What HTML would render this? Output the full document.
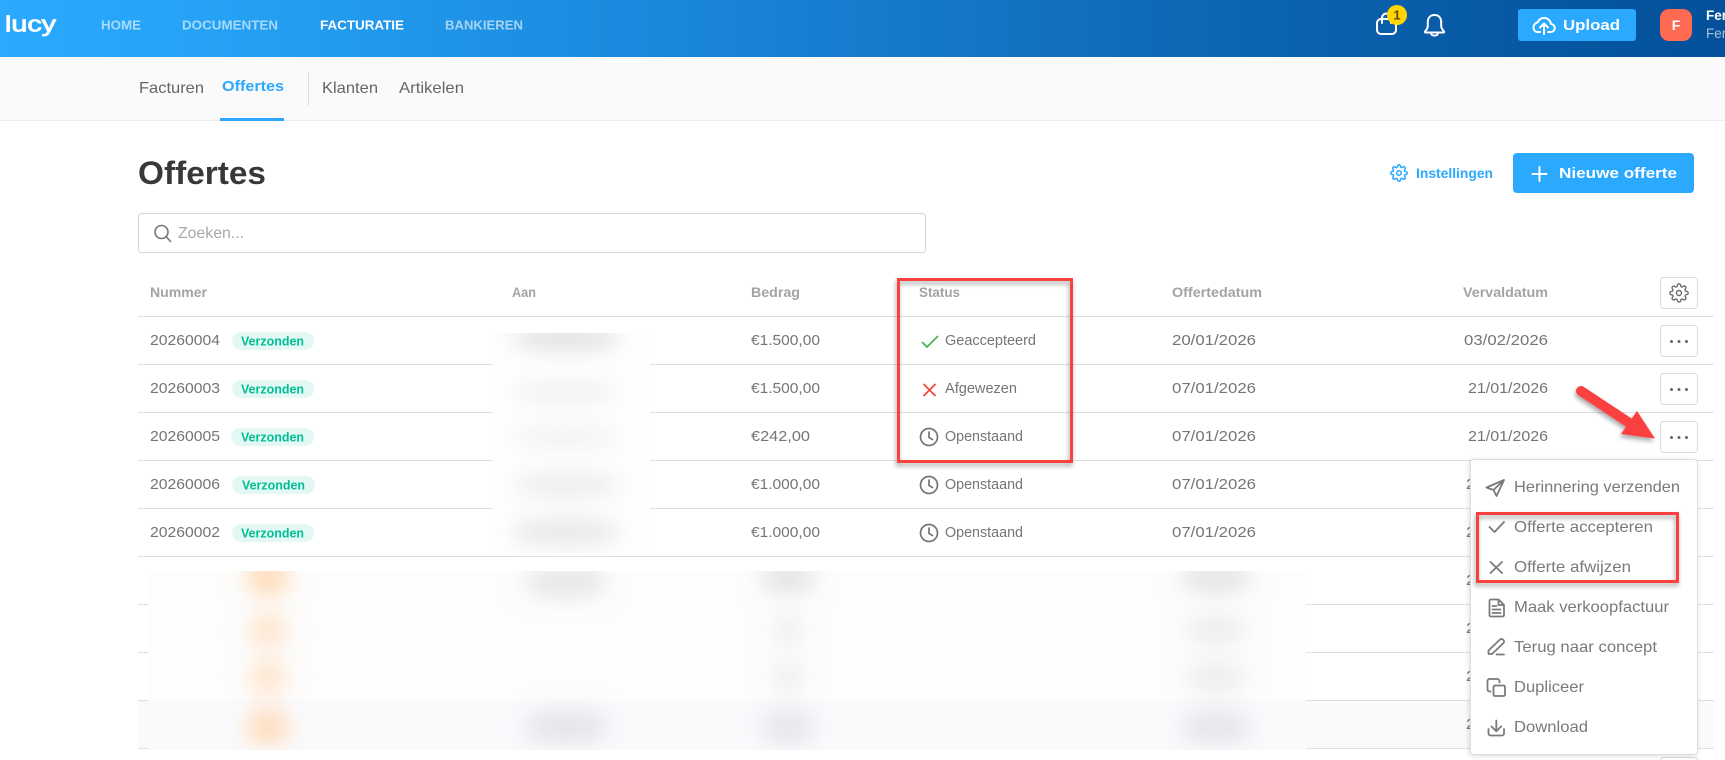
<!DOCTYPE html>
<html lang="nl"><head><meta charset="utf-8"><title>Offertes</title>
<style>
html,body{margin:0;padding:0;background:#fff;width:1725px;height:760px;overflow:hidden}
svg{display:block}
text{font-family:"Liberation Sans",sans-serif;font-size:15px;fill:#757575}
.h{font-weight:bold;font-size:13.5px;fill:#a3a3a3}
.nav{font-weight:bold;font-size:13px;fill:#fff;fill-opacity:.6}
.tab{font-size:16px;fill:#666}
.bd{font-weight:bold;font-size:13px;fill:#00bf94}
.m{font-size:16px;fill:#7a7a7a}
.st{fill:none;stroke:#757575;stroke-width:1.7;stroke-linecap:round;stroke-linejoin:round}
</style></head><body>
<svg width="1725" height="760" viewBox="0 0 1725 760" xmlns="http://www.w3.org/2000/svg">
<defs>
<linearGradient id="hd" x1="0" y1="0" x2="1725" y2="0" gradientUnits="userSpaceOnUse"><stop offset="0" stop-color="#2aa9ff"/><stop offset=".12" stop-color="#25a2f5"/><stop offset=".42" stop-color="#1984d8"/><stop offset=".75" stop-color="#0b62ae"/><stop offset="1" stop-color="#04509a"/></linearGradient>
<filter id="b6" x="-30%" y="-30%" width="160%" height="160%"><feGaussianBlur stdDeviation="11"/></filter>
<filter id="sh" x="-10%" y="-10%" width="120%" height="125%"><feDropShadow dx="-1" dy="3" stdDeviation="2.5" flood-color="#000" flood-opacity=".35"/></filter>
<filter id="mn" x="-10%" y="-10%" width="120%" height="120%"><feDropShadow dx="-1" dy="1" stdDeviation="2.5" flood-color="#000" flood-opacity=".14"/></filter>
<clipPath id="c1"><rect x="493" y="333" width="157" height="220"/></clipPath>
<clipPath id="c2"><rect x="148" y="571" width="1158" height="179"/></clipPath>
<symbol id="gear" viewBox="0 0 24 24"><circle cx="12" cy="12" r="3"/><path d="M19.4 15a1.65 1.65 0 0 0 .33 1.82l.06.06a2 2 0 0 1 0 2.83 2 2 0 0 1-2.83 0l-.06-.06a1.65 1.65 0 0 0-1.82-.33 1.65 1.65 0 0 0-1 1.51V21a2 2 0 0 1-2 2 2 2 0 0 1-2-2v-.09A1.65 1.65 0 0 0 9 19.4a1.65 1.65 0 0 0-1.82.33l-.06.06a2 2 0 0 1-2.83 0 2 2 0 0 1 0-2.83l.06-.06a1.65 1.65 0 0 0 .33-1.82 1.65 1.65 0 0 0-1.51-1H3a2 2 0 0 1-2-2 2 2 0 0 1 2-2h.09A1.65 1.65 0 0 0 4.6 9a1.65 1.65 0 0 0-.33-1.82l-.06-.06a2 2 0 0 1 0-2.83 2 2 0 0 1 2.83 0l.06.06a1.65 1.65 0 0 0 1.82.33H9a1.65 1.65 0 0 0 1-1.51V3a2 2 0 0 1 2-2 2 2 0 0 1 2 2v.09a1.65 1.65 0 0 0 1 1.51 1.65 1.65 0 0 0 1.82-.33l.06-.06a2 2 0 0 1 2.83 0 2 2 0 0 1 0 2.83l-.06.06a1.65 1.65 0 0 0-.33 1.82V9a1.65 1.65 0 0 0 1.51 1H21a2 2 0 0 1 2 2 2 2 0 0 1-2 2h-.09a1.65 1.65 0 0 0-1.51 1z"/></symbol>
</defs>

<!-- header -->
<rect width="1725" height="57" fill="url(#hd)"/>
<text x="5" y="31.5" textLength="51" lengthAdjust="spacingAndGlyphs" style="font-size:22px;fill:#fff;stroke:#fff;stroke-width:.8">lucy</text>
<text class="nav" x="101" y="29.5" textLength="40" lengthAdjust="spacingAndGlyphs">HOME</text>
<text class="nav" x="182" y="29.5" textLength="96" lengthAdjust="spacingAndGlyphs">DOCUMENTEN</text>
<text class="nav" x="320" y="29.5" textLength="84" lengthAdjust="spacingAndGlyphs" style="fill-opacity:1">FACTURATIE</text>
<text class="nav" x="445" y="29.5" textLength="78" lengthAdjust="spacingAndGlyphs">BANKIEREN</text>

<rect x="1377" y="19" width="19" height="15" rx="4" fill="none" stroke="#fff" stroke-width="2"/>
<path d="M1382 23v-5a4.500 4.500 0 0 1 9 0v5" fill="none" stroke="#fff" stroke-width="2" stroke-linecap="round"/>
<circle cx="1397" cy="15" r="10" fill="#ffd600"/>
<text x="1397" y="19.500" text-anchor="middle" style="font-size:13px;font-weight:bold;fill:#6b3f1d">1</text>
<path d="M1434.500 15c-4.800 0-6.700 3.600-6.700 7.500v3.500c0 2-1 3.500-2.800 5.500-.5.600 0 1 .5 1h18c.5 0 1-.4.500-1-1.800-2-2.800-3.500-2.800-5.500v-3.500c0-3.900-1.900-7.500-6.700-7.500z" fill="none" stroke="#fff" stroke-width="2" stroke-linejoin="round"/>
<path d="M1431 33.500a3.600 2.800 0 0 0 7 0" fill="none" stroke="#fff" stroke-width="2"/>

<rect x="1518" y="9" width="118" height="32" rx="3" fill="#2aa9ff"/>
<path d="M1548 32h2.500a4 4 0 0 0 .5-8 7 7 0 0 0-13.500-1.500 5 5 0 0 0-1 9.500h3.500" fill="none" stroke="#fff" stroke-width="2" stroke-linecap="round" stroke-linejoin="round"/>
<path d="M1544 34v-10M1540 27.500l4-4 4 4" fill="none" stroke="#fff" stroke-width="2" stroke-linecap="round" stroke-linejoin="round"/>
<text x="1563" y="30" textLength="57" lengthAdjust="spacingAndGlyphs" style="font-size:15px;font-weight:bold;fill:#fff">Upload</text>
<rect x="1660" y="9" width="32" height="32" rx="9" fill="#ff6b52"/>
<text x="1676" y="30" text-anchor="middle" style="font-size:14px;font-weight:bold;fill:#fff">F</text>
<text x="1706" y="20" style="font-size:13.500px;font-weight:bold;fill:#fff">Fer</text>
<text x="1706" y="38" style="font-size:13.500px;fill:#a9c3dc">Fer</text>

<!-- subnav -->
<rect y="57" width="1725" height="63" fill="#fafafa"/>
<rect y="120" width="1725" height="1" fill="#eee"/>
<text class="tab" x="139" y="93" textLength="65" lengthAdjust="spacingAndGlyphs">Facturen</text>
<text class="tab" x="222" y="91" textLength="62" lengthAdjust="spacingAndGlyphs" style="fill:#2aa9ff;font-weight:bold;font-size:15px">Offertes</text>
<rect x="220" y="118" width="64" height="3" fill="#2aa9ff"/>
<rect x="308" y="72" width="1" height="34" fill="#ddd"/>
<text class="tab" x="322" y="93" textLength="56" lengthAdjust="spacingAndGlyphs">Klanten</text>
<text class="tab" x="399" y="93" textLength="65" lengthAdjust="spacingAndGlyphs">Artikelen</text>

<!-- title -->
<text x="138" y="184" textLength="128" lengthAdjust="spacingAndGlyphs" style="font-size:32px;font-weight:bold;fill:#383838">Offertes</text>
<use href="#gear" x="1390" y="164" width="18" height="18" fill="none" stroke="#2aa9ff" stroke-width="2"/>
<text x="1416" y="178" textLength="77" lengthAdjust="spacingAndGlyphs" style="font-size:13.500px;font-weight:bold;fill:#2aa9ff">Instellingen</text>
<rect x="1513" y="153" width="181" height="40" rx="4" fill="#2aa9ff"/>
<path d="M1539.500 167v14M1532.500 174h14" stroke="#fff" stroke-width="2" stroke-linecap="round"/>
<text x="1559" y="178" textLength="118" lengthAdjust="spacingAndGlyphs" style="font-size:15px;font-weight:bold;fill:#fff">Nieuwe offerte</text>

<!-- search -->
<rect x="138.500" y="213.500" width="787" height="39" rx="3" fill="#fff" stroke="#d6d6d6"/>
<circle cx="161.500" cy="232" r="6.500" fill="none" stroke="#777" stroke-width="1.600"/>
<path d="M166.500 237l4 4.500" stroke="#777" stroke-width="1.600" stroke-linecap="round"/>
<text x="178" y="238" textLength="66" lengthAdjust="spacingAndGlyphs" style="font-size:16px;fill:#a8a8a8">Zoeken...</text>

<!-- table head -->
<text class="h" x="150" y="297" textLength="57" lengthAdjust="spacingAndGlyphs">Nummer</text>
<text class="h" x="512" y="297" textLength="24" lengthAdjust="spacingAndGlyphs">Aan</text>
<text class="h" x="751" y="297" textLength="49" lengthAdjust="spacingAndGlyphs">Bedrag</text>
<text class="h" x="919" y="297" textLength="41" lengthAdjust="spacingAndGlyphs">Status</text>
<text class="h" x="1172" y="297" textLength="90" lengthAdjust="spacingAndGlyphs">Offertedatum</text>
<text class="h" x="1463" y="297" textLength="85" lengthAdjust="spacingAndGlyphs">Vervaldatum</text>

<!-- row lines -->
<g fill="#dedede">
<rect x="138" y="316" width="1576" height="1"/><rect x="138" y="364" width="1576" height="1"/><rect x="138" y="412" width="1576" height="1"/><rect x="138" y="460" width="1576" height="1"/><rect x="138" y="508" width="1576" height="1"/><rect x="138" y="556" width="1576" height="1"/>
<rect x="138" y="604" width="1576" height="1"/><rect x="138" y="652" width="1576" height="1"/>
</g>
<rect x="138" y="701" width="1576" height="47" fill="#fafafd"/>
<g fill="#dedede"><rect x="138" y="700" width="1576" height="1"/><rect x="138" y="748" width="1576" height="1"/></g>

<!-- rows -->
<g>
<text x="150" y="345" textLength="70" lengthAdjust="spacingAndGlyphs">20260004</text>
<text x="150" y="393" textLength="70" lengthAdjust="spacingAndGlyphs">20260003</text>
<text x="150" y="441" textLength="70" lengthAdjust="spacingAndGlyphs">20260005</text>
<text x="150" y="489" textLength="70" lengthAdjust="spacingAndGlyphs">20260006</text>
<text x="150" y="537" textLength="70" lengthAdjust="spacingAndGlyphs">20260002</text>
</g>
<g fill="#e3f8f5">
<rect x="232" y="332" width="82" height="18" rx="9"/><rect x="232" y="380" width="82" height="18" rx="9"/><rect x="231" y="428" width="83" height="18" rx="9"/><rect x="232" y="476" width="83" height="18" rx="9"/><rect x="232" y="524" width="82" height="18" rx="9"/>
</g>
<text class="bd" x="241" y="345.500" textLength="63" lengthAdjust="spacingAndGlyphs">Verzonden</text>
<text class="bd" x="241" y="393.500" textLength="63" lengthAdjust="spacingAndGlyphs">Verzonden</text>
<text class="bd" x="241" y="441.500" textLength="63" lengthAdjust="spacingAndGlyphs">Verzonden</text>
<text class="bd" x="242" y="489.500" textLength="63" lengthAdjust="spacingAndGlyphs">Verzonden</text>
<text class="bd" x="241" y="537.500" textLength="63" lengthAdjust="spacingAndGlyphs">Verzonden</text>

<text x="751" y="345" textLength="69" lengthAdjust="spacingAndGlyphs">€1.500,00</text>
<text x="751" y="393" textLength="69" lengthAdjust="spacingAndGlyphs">€1.500,00</text>
<text x="751" y="441" textLength="59" lengthAdjust="spacingAndGlyphs">€242,00</text>
<text x="751" y="489" textLength="69" lengthAdjust="spacingAndGlyphs">€1.000,00</text>
<text x="751" y="537" textLength="69" lengthAdjust="spacingAndGlyphs">€1.000,00</text>

<path d="M922 342l5 5 11-11" fill="none" stroke="#46b450" stroke-width="1.700"/>
<text x="945" y="345" textLength="91" lengthAdjust="spacingAndGlyphs">Geaccepteerd</text>
<path d="M923.500 384l12 12M935.500 384l-12 12" fill="none" stroke="#f44336" stroke-width="1.700"/>
<text x="945" y="393" textLength="72" lengthAdjust="spacingAndGlyphs">Afgewezen</text>
<g class="st"><circle cx="929" cy="437" r="8.500"/><path d="M929 432v5.500l3.500 2"/></g>
<text x="945" y="441" textLength="78" lengthAdjust="spacingAndGlyphs">Openstaand</text>
<g class="st"><circle cx="929" cy="485" r="8.500"/><path d="M929 480v5.500l3.500 2"/></g>
<text x="945" y="489" textLength="78" lengthAdjust="spacingAndGlyphs">Openstaand</text>
<g class="st"><circle cx="929" cy="533" r="8.500"/><path d="M929 528v5.500l3.500 2"/></g>
<text x="945" y="537" textLength="78" lengthAdjust="spacingAndGlyphs">Openstaand</text>

<text x="1172" y="345" textLength="84" lengthAdjust="spacingAndGlyphs">20/01/2026</text>
<text x="1172" y="393" textLength="84" lengthAdjust="spacingAndGlyphs">07/01/2026</text>
<text x="1172" y="441" textLength="84" lengthAdjust="spacingAndGlyphs">07/01/2026</text>
<text x="1172" y="489" textLength="84" lengthAdjust="spacingAndGlyphs">07/01/2026</text>
<text x="1172" y="537" textLength="84" lengthAdjust="spacingAndGlyphs">07/01/2026</text>

<text x="1464" y="345" textLength="84" lengthAdjust="spacingAndGlyphs">03/02/2026</text>
<text x="1468" y="393" textLength="80" lengthAdjust="spacingAndGlyphs">21/01/2026</text>
<text x="1468" y="441" textLength="80" lengthAdjust="spacingAndGlyphs">21/01/2026</text>
<text x="1466" y="489" textLength="82" lengthAdjust="spacingAndGlyphs">21/01/2026</text>
<text x="1466" y="537" textLength="82" lengthAdjust="spacingAndGlyphs">21/01/2026</text>
<text x="1466" y="585" textLength="82" lengthAdjust="spacingAndGlyphs">21/01/2026</text>
<text x="1466" y="633" textLength="82" lengthAdjust="spacingAndGlyphs">21/01/2026</text>
<text x="1466" y="681" textLength="82" lengthAdjust="spacingAndGlyphs">21/01/2026</text>
<text x="1466" y="729" textLength="82" lengthAdjust="spacingAndGlyphs">21/01/2026</text>

<!-- blurred regions -->
<g clip-path="url(#c1)">
<rect x="493" y="333" width="157" height="220" fill="#fefefe"/>
<g filter="url(#b6)">
<ellipse cx="566" cy="338" rx="55" ry="12" fill="#e0e0e0"/>
<ellipse cx="566" cy="392" rx="55" ry="10" fill="#f0f0f0"/>
<ellipse cx="566" cy="437" rx="55" ry="10" fill="#f1f1f1"/>
<ellipse cx="566" cy="485" rx="55" ry="12" fill="#ececec"/>
<ellipse cx="566" cy="532" rx="55" ry="14" fill="#e8e8e8"/>
</g></g>
<g clip-path="url(#c2)">
<rect x="148" y="571" width="1158" height="179" fill="#fdfdfd"/>
<rect x="148" y="700" width="1158" height="50" fill="#fafafd"/>
<g filter="url(#b6)">
<ellipse cx="268" cy="578" rx="22" ry="18" fill="#ffdcb8"/>
<ellipse cx="268" cy="630" rx="20" ry="18" fill="#ffe6cf"/>
<ellipse cx="268" cy="677" rx="20" ry="18" fill="#ffe6cf"/>
<ellipse cx="268" cy="727" rx="22" ry="20" fill="#ffdfc0"/>
<ellipse cx="566" cy="582" rx="42" ry="16" fill="#e6e6e6"/>
<ellipse cx="566" cy="727" rx="44" ry="18" fill="#e6e6ea"/>
<ellipse cx="788" cy="578" rx="28" ry="16" fill="#e4e4e4"/>
<ellipse cx="788" cy="630" rx="16" ry="16" fill="#efefef"/>
<ellipse cx="788" cy="677" rx="16" ry="16" fill="#efefef"/>
<ellipse cx="788" cy="727" rx="28" ry="18" fill="#e7e7eb"/>
<ellipse cx="1216" cy="578" rx="36" ry="16" fill="#e5e5e5"/>
<ellipse cx="1216" cy="630" rx="32" ry="16" fill="#eeeeee"/>
<ellipse cx="1216" cy="677" rx="32" ry="16" fill="#eeeeee"/>
<ellipse cx="1216" cy="727" rx="36" ry="18" fill="#e7e7eb"/>
</g></g>

<!-- action buttons -->
<g fill="#fff" stroke="#dcdcdc">
<rect x="1660.500" y="277.500" width="37" height="31" rx="3"/>
<rect x="1660.500" y="325.500" width="37" height="31" rx="3"/>
<rect x="1660.500" y="373.500" width="37" height="31" rx="3"/>
<rect x="1660.500" y="421.500" width="37" height="31" rx="3"/>
<rect x="1660.500" y="757.500" width="37" height="31" rx="3"/>
</g>
<use href="#gear" x="1669" y="283" width="20" height="20" fill="none" stroke="#6e6e6e" stroke-width="1.700"/>
<g fill="#666">
<circle cx="1671.500" cy="341.500" r="1.500"/><circle cx="1679" cy="341.500" r="1.500"/><circle cx="1686.500" cy="341.500" r="1.500"/>
<circle cx="1671.500" cy="389.500" r="1.500"/><circle cx="1679" cy="389.500" r="1.500"/><circle cx="1686.500" cy="389.500" r="1.500"/>
<circle cx="1671.500" cy="437.500" r="1.500"/><circle cx="1679" cy="437.500" r="1.500"/><circle cx="1686.500" cy="437.500" r="1.500"/>
</g>

<!-- dropdown menu -->
<rect x="1470.500" y="459.500" width="227" height="295" rx="3" fill="#fff" stroke="#dedede" filter="url(#mn)"/>
<g class="st" style="stroke:#7a7a7a;stroke-width:1.800">
<path d="M1504 480l-17.500 7.500 7 2.500 3 6zM1504 480l-10.500 10"/>
<path d="M1489.500 527l5 5 9.500-10"/>
<path d="M1490.500 562l11.500 11M1502 562l-11.500 11"/>
<path d="M1491 599.500h7.500l5.500 5.500v10a1.500 1.500 0 0 1-1.500 1.500h-11.500a1.500 1.500 0 0 1-1.500-1.500v-14a1.500 1.500 0 0 1 1.500-1.500zM1498.500 599.500v5.500h5.500M1492.500 606h4M1492.500 609.500h8M1492.500 613h8"/>
<path d="M1488.500 654v-3.500l11.500-11a2.500 2.500 0 0 1 3.500 3.500l-11.500 11zM1496.500 654.500h7.500"/>
<rect x="1493.500" y="685.500" width="11.500" height="10.500" rx="1.500"/>
<path d="M1490.500 691.500h-1a2 2 0 0 1-2-2v-8.500a2 2 0 0 1 2-2h8a2 2 0 0 1 2 2v1.500"/>
<path d="M1488.500 729v4.500a2 2 0 0 0 2 2h11.500a2 2 0 0 0 2-2v-4.500M1496.300 720.500v10.500M1491.500 726.500l4.800 4.800 4.800-4.800"/>
</g>
<text class="m" x="1514" y="492" textLength="166" lengthAdjust="spacingAndGlyphs">Herinnering verzenden</text>
<text class="m" x="1514" y="532" textLength="139" lengthAdjust="spacingAndGlyphs">Offerte accepteren</text>
<text class="m" x="1514" y="572" textLength="117" lengthAdjust="spacingAndGlyphs">Offerte afwijzen</text>
<text class="m" x="1514" y="612" textLength="155" lengthAdjust="spacingAndGlyphs">Maak verkoopfactuur</text>
<text class="m" x="1514" y="652" textLength="143" lengthAdjust="spacingAndGlyphs">Terug naar concept</text>
<text class="m" x="1514" y="692" textLength="70" lengthAdjust="spacingAndGlyphs">Dupliceer</text>
<text class="m" x="1514" y="732" textLength="74" lengthAdjust="spacingAndGlyphs">Download</text>

<!-- annotations -->
<rect x="898.500" y="279.500" width="173" height="182" fill="none" stroke="#fb4141" stroke-width="3" filter="url(#sh)"/>
<rect x="1477.500" y="513.500" width="200" height="68" fill="none" stroke="#fb4141" stroke-width="3" filter="url(#sh)"/>
<g filter="url(#sh)">
<path d="M1581 391l50 33" fill="none" stroke="#fb4141" stroke-width="10" stroke-linecap="round"/>
<path d="M1637 411l18 27.500-34-4.500z" fill="#fb4141"/>
</g>
</svg>
</body></html>
